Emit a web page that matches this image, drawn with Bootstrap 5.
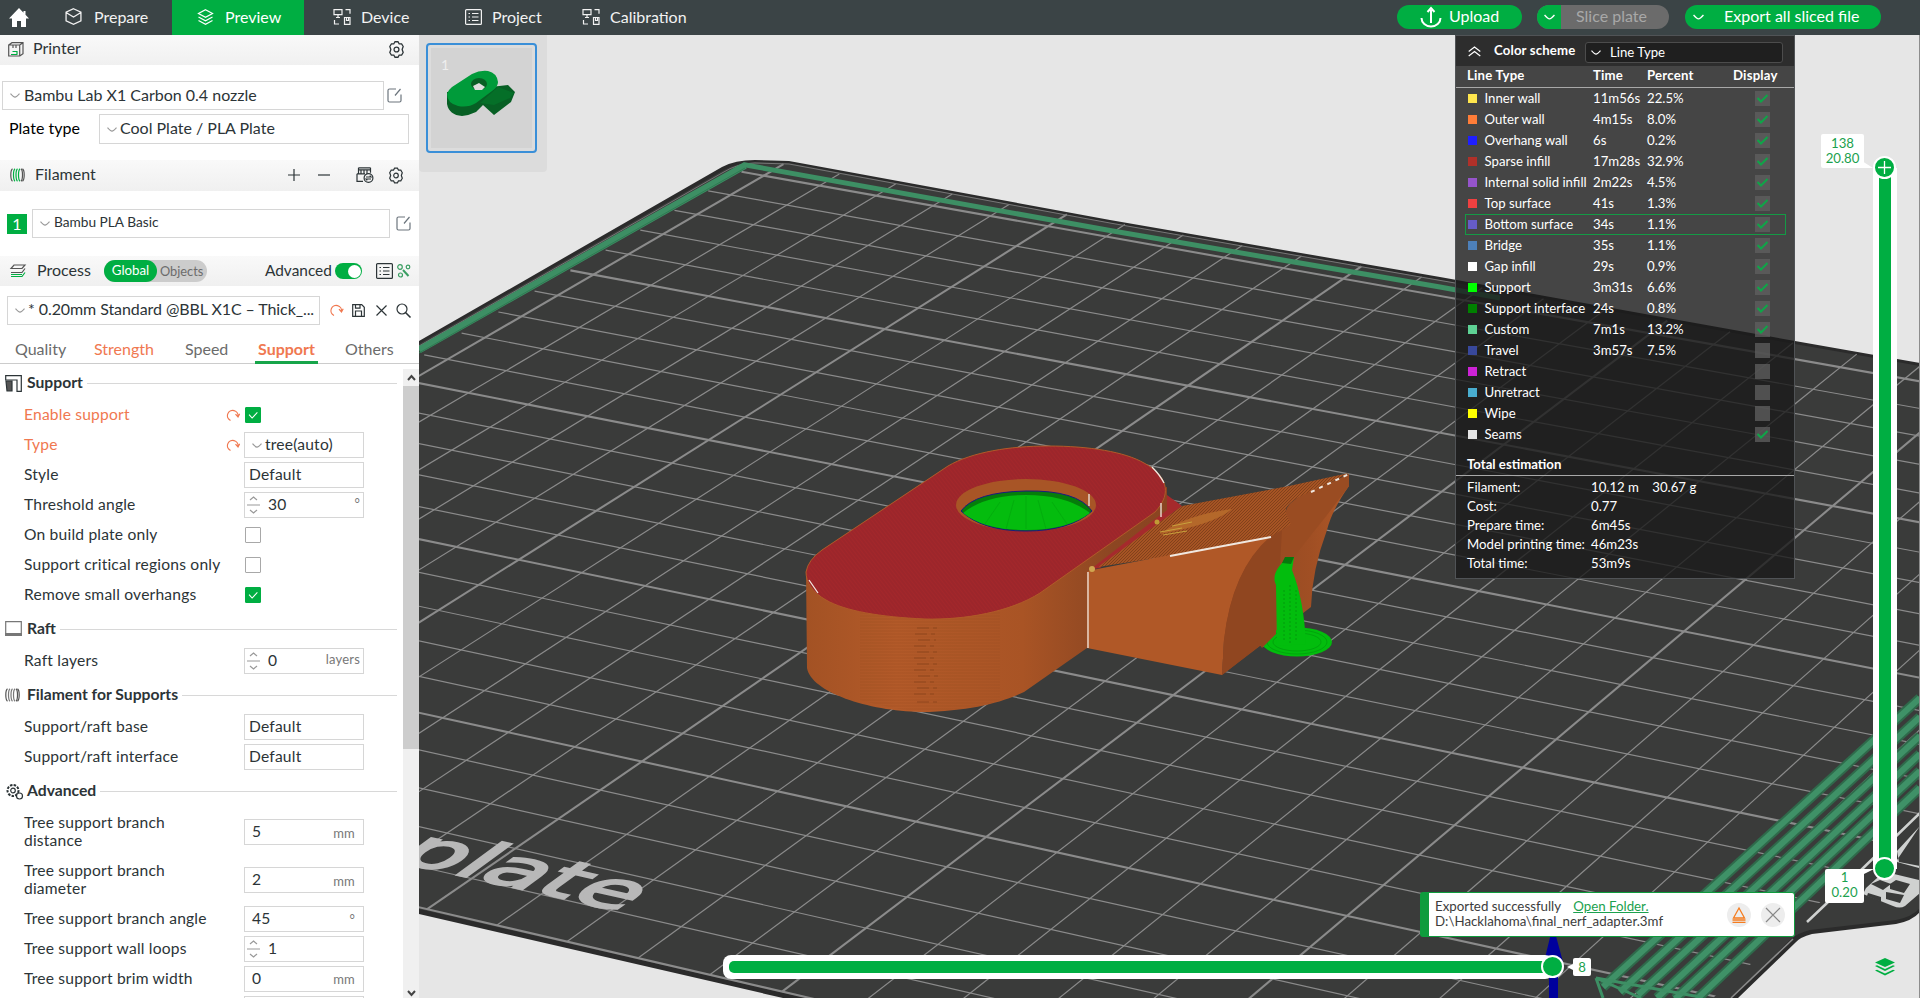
<!DOCTYPE html>
<html lang="en">
<head>
<meta charset="utf-8">
<title>Slicer preview</title>
<meta name="viewport" content="width=device-width, initial-scale=1">
<link href="https://cdn.jsdelivr.net/npm/bootstrap@5.3.0/dist/css/bootstrap.min.css" rel="stylesheet">
<style>
:root{--grn:#00ae42;--org:#f07850;--ink:#2c3437}
body{font-family:Lato,"Noto Sans",sans-serif;font-size:16px;line-height:1.2;color:var(--ink);height:998px;overflow:hidden;background:#e6e6e6}
svg{display:block;flex:none;overflow:visible}
.ic{fill:none;stroke:currentColor;stroke-width:1.2}
.topbar{height:35px;background:#3b4446;color:#f2f2f2;font-size:16px}
.tab-i{height:35px;display:flex;align-items:center;gap:12px;padding-bottom:2px}
.tab-i.on{background:var(--grn);color:#fff}
.pill{height:24px;border-radius:12px;background:var(--grn);color:#fff;overflow:hidden;margin-top:-1px}
.pill>span{padding-bottom:2px}
.pill.off{background:#6b6b6b;color:#a8a8a8}
.side{width:419px;background:#fff}
.bar-h{background:linear-gradient(#f9f9f9,#f0f0f0);font-size:16px}
.bar-h>span{padding-bottom:2px}
.box{border:1px solid #d6d6d6;background:#fff;display:flex;align-items:center;white-space:nowrap;overflow:hidden;padding-bottom:2px}
.chev{width:10px;height:5px;color:#999;margin-top:2px}
.num1{width:20px;height:20px;background:var(--grn);color:#fff}
.seg{width:103px;height:22px;border-radius:11px;background:#ccc;color:#6b6b6b;font-size:12.8px}
.seg b{width:53px;height:22px;border-radius:11px;background:var(--grn);color:#fff;font-weight:400;font-size:13.3px}
.sw{width:27px;height:16px;border-radius:8px;background:var(--grn)}
.sw i{width:13px;height:13px;border-radius:50%;background:#fff;margin:1.5px}
.tabs{height:39px;border-bottom:1px solid #ccc;font-size:16px;color:#6b6b6b;position:relative}
.tabs span{line-height:48px;height:39px}
.org{color:var(--org)}
.tabs .act{font-weight:700;border-bottom:3px solid #17a54a;padding:0 3px}
.grp{height:34px;margin-top:2px;font-weight:700;font-size:15.7px;padding-left:5px;padding-right:6px}
.grp span{padding-bottom:2px}
.grp hr{border-color:#d8d8d8;opacity:1;margin:0}
.opt{height:30px;padding-left:24px;font-size:15.6px;letter-spacing:.2px}
.opt.tall{height:48px;line-height:18px}
.opt .lab{width:202px;padding-bottom:2px}
.opt .rs{width:18px}
.opt .box{width:120px;height:26px}
.unit{font-size:13px;color:#777;margin-left:auto}
.chk{width:16px;height:16px;border:1px solid #a8a8a8;border-radius:1px;background:#fff;margin-left:1px}
.chk.on{background:var(--grn);border-color:var(--grn)}
.spin{width:13px;margin:2px 8px 0 2px;color:#999}
.sbar{width:16px;height:629px;margin-top:5px;background:#f0f0f0;color:#444}
.thumbtrk{background:#cdcdcd;height:363px;margin-top:17px}
.stage{position:relative;background:#e6e6e6;overflow:hidden}
.plate-card{position:absolute;left:0;top:0;width:128px;height:137px;background:#dcdcdc;border-radius:0 0 4px 4px}
.plate-card>div{position:absolute;left:7px;top:8px;width:111px;height:110px;border:2px solid #3a8fd8;border-radius:4px;padding:3px}
.plate-card>div>div{background:#d3d3d3;width:101px;height:100px}
.legend{position:absolute;left:1036px;top:0;width:340px;height:544px;background:rgba(26,26,26,.79);border:1px solid #505356;color:#fff;font-size:13.2px}
.lg-top{height:30px;background:rgba(30,30,30,.6)}
.lg-sel{width:198px;height:21px;border:1px solid #4c4c4c;border-radius:3px;background:#1f1f1f;margin-left:8px;margin-top:3px}
.lg-row{height:21px;display:grid;grid-template-columns:17px 108.5px 54px 107.5px 15px;align-items:center;margin:0 8px 0 8.5px;padding-left:2px;white-space:nowrap;border:1px solid transparent}
.lg-row.hot{border-color:#149a45}
.lg-row i{width:9px;height:9px}
.lg-row em{width:15px;height:15px;background:rgba(96,96,96,.75);display:block}
.lg-hd{height:22px;border-bottom:1px solid #a8a8a8;font-weight:700;padding-left:11px;padding-bottom:1px;display:flex;align-items:center}
.est{height:19px;padding-left:11px}
.est span:first-child{width:124px}
.toastx{position:absolute;left:1001px;top:857px;width:375px;height:45px;background:#fff;border:1px solid #0f9c3d;border-left:9px solid #0f9c3d;border-radius:3px;font-size:13.3px;line-height:15px;color:#3c3c3c}
.rnd{width:24px;height:24px;border-radius:50%;background:#ededed;flex:none}
.vs{position:absolute;left:1454px;top:133px;width:24px;height:701px;background:#fff;padding:0 6px}
.hs{position:absolute;left:304px;top:920px;width:830px;height:24px;background:#fff;border-radius:8px;padding:6px 0 6px 6px}
.hs div{background:var(--grn);height:12px;border-radius:5px}
.knob{position:absolute;width:23px;height:23px;border-radius:50%;background:var(--grn);border:2px solid #fff}
.tipx{position:absolute;background:#fff;color:#1ba14e;border-radius:2px;text-align:center;font-size:13.2px;line-height:15px}
</style>
</head>
<body class="d-flex flex-column">
<svg width="0" height="0" class="position-absolute">
 <defs>
  <symbol id="gear" viewBox="0 0 16 16"><path d="M5.5 2.6 6.6.7h2.8l1.1 1.9 2.3.1 1.5 2.5-1 2.8 1 2.8-1.5 2.5-2.3.1-1.1 1.9H6.6l-1.1-1.9-2.3-.1-1.5-2.5 1-2.8-1-2.8 1.5-2.5z"/><circle cx="8" cy="8" r="2.3"/></symbol>
  <symbol id="edit" viewBox="0 0 15 15"><path d="M9 1H2.500Q1 1 1 2.500V12.500Q1 14 2.500 14H12.500Q14 14 14 12.500V6.500M8 7.500 13.500 1"/></symbol>
  <symbol id="dn" viewBox="0 0 10 5"><path d="M.5.7Q3.500 4.200 5 4.200T9.500.7"/></symbol>
  <symbol id="undo" viewBox="0 0 14 14"><path d="M4.500 12.500A5.300 5.300 0 1 1 12 8.500M9.500 6.200 12 9l1.700-3.200"/></symbol>
  <symbol id="spool" viewBox="0 0 15 14"><path d="M2.500.8Q.8 2 .8 7t1.700 6.200M12.500.8Q14.200 2 14.200 7t-1.700 6.200M11 .8Q12.500 2 12.500 7T11 13.200" stroke="#555"/><path d="M5 .8Q3.500 2 3.500 7T5 13.200M7.500.8Q6 2 6 7t1.500 6.200M10 .8Q8.500 2 8.500 7T10 13.200"/></symbol>
  <symbol id="list" viewBox="0 0 17 16"><rect x=".6" y=".6" width="15.800" height="14.800" rx="1"/><path d="M3.500 4.500h1.500M7 4.500h6.500M3.500 8h1.500M7 8h6.500M3.500 11.500h1.500M7 11.500h6.500"/></symbol>
  <symbol id="net" viewBox="0 0 18 16"><path d="M1 .7h8v5H1zM3 8.500h4M5 5.700v2.500M1.500 11v4h4.500M12.500.7h4.500v4M11.500 8.500h5.500v6.800h-5.500zM13.500 8.500v3h2v-3"/></symbol>
  <symbol id="layers" viewBox="0 0 16 16"><path d="M8 .8 15 4.500 8 8.200 1 4.500zM1 8l7 3.700L15 8M1 11.500l7 3.700 7-3.700"/></symbol>
 </defs>
</svg>

<header class="topbar d-flex flex-shrink-0 align-items-center">
 <svg width="20" height="20" viewBox="0 0 20 20" fill="#fff" style="margin-left:9px"><path d="M10 0 0 10.500h3V19h5v-6h4v6h5v-8.500h3L16.500 6.700V3h-2v1.700z"/></svg>
 <div class="tab-i" style="width:143px;padding-left:36px"><svg class="ic" width="17" height="17" viewBox="0 0 16 16"><path d="M8 .7 15 4v8l-7 3.300L1 12V4zM1 4.200 8 8.500l7-4.300"/></svg><span>Prepare</span></div>
 <div class="tab-i on" style="width:132px;padding-left:25px;gap:11px"><svg class="ic" width="17" height="16"><use href="#layers"/></svg>Preview</div>
 <div class="tab-i" style="width:132px;padding-left:29px;gap:10px"><svg class="ic" width="18" height="16"><use href="#net"/></svg>Device</div>
 <div class="tab-i" style="width:118px;padding-left:29px;gap:10px"><svg class="ic" width="17" height="16"><use href="#list"/></svg>Project</div>
 <div class="tab-i" style="width:140px;padding-left:28px;gap:10px"><svg class="ic" width="18" height="16"><use href="#net"/></svg>Calibration</div>
 <div class="d-flex ms-auto" style="margin-right:39px">
  <div class="pill d-flex align-items-center" style="width:125px;padding-left:23px;gap:7px"><svg width="22" height="22" viewBox="0 0 22 22" fill="none" stroke="#fff" stroke-width="2"><path d="M1.500 12a9.500 8.500 0 0 0 19 0M11 17V4M7.500 6 11 2l3.500 4"/></svg><span>Upload</span></div>
  <div class="pill off d-flex align-items-center" style="width:132px;margin-left:15px"><div class="h-100 d-flex align-items-center justify-content-center" style="width:24px;background:#00ae42;color:#fff"><svg class="ic" width="11" height="6"><use href="#dn"/></svg></div><span style="margin-left:15px">Slice plate</span></div>
  <div class="pill d-flex align-items-center" style="width:196px;margin-left:16px;padding-left:8px"><svg class="ic" width="11" height="6"><use href="#dn"/></svg><span style="margin-left:20px">Export all sliced file</span></div>
 </div>
</header>

<div class="d-flex flex-grow-1">
<aside class="side flex-shrink-0 d-flex flex-column overflow-hidden" style="height:963px">
 <div class="bar-h d-flex align-items-center flex-shrink-0" style="height:30px;padding:0 14px 2px 8px">
  <svg class="ic" width="16" height="15" viewBox="0 0 16 15" style="color:#555"><path d="M.7 3h11v11H.7zM.7 3 4 .7h11v11L11.700 14M15 .7 11.700 3M5 3v3M8 3v3"/><path d="M3 12.500h6.500M4.500 9.500H9v2.500" stroke="#00ae42"/></svg>
  <span style="margin-left:9px">Printer</span><svg class="ic ms-auto" width="17" height="17"><use href="#gear"/></svg>
 </div>
 <div class="flex-shrink-0" style="height:95px;padding:16px 10px 0 2px">
  <div class="d-flex align-items-center"><div class="box" style="width:382px;height:29px;padding-left:7px;gap:4px"><svg class="ic chev"><use href="#dn"/></svg>Bambu Lab X1 Carbon 0.4 nozzle</div><svg class="ic text-secondary" style="margin-left:3px" width="15" height="15"><use href="#edit"/></svg></div>
  <div class="d-flex align-items-center" style="margin-top:4px"><span class="text-black" style="width:97px;padding:0 0 2px 7px">Plate type</span><div class="box" style="width:310px;height:30px;padding-left:7px;gap:3px"><svg class="ic chev"><use href="#dn"/></svg>Cool Plate / PLA Plate</div></div>
 </div>
 <div class="bar-h d-flex align-items-center flex-shrink-0" style="height:31px;padding:0 15px 1px 10px">
  <svg class="ic" width="15" height="14" style="color:#00ae42"><use href="#spool"/></svg>
  <span style="margin-left:10px">Filament</span>
  <svg class="ic ms-auto" width="12" height="12" viewBox="0 0 12 12"><path d="M6 0v12M0 6h12"/></svg>
  <svg class="ic" style="margin-left:18px" width="12" height="12" viewBox="0 0 12 12"><path d="M0 6h12"/></svg>
  <svg class="ic" style="margin-left:26px" width="18" height="16" viewBox="0 0 18 16"><path d="M2.500.8h12M2.500 2.800h12M2.500.8v6M5 2.800v4M8 2.800v4M11 2.800v4M14.500.8v5M1 6.800h8M1 6.800v7.500h6"/><circle cx="12.500" cy="11" r="4.400"/><path d="M10 10h5l-1.200-1.300M15 12h-5l1.200 1.300"/></svg>
  <svg class="ic" style="margin-left:14px" width="16" height="17"><use href="#gear"/></svg>
 </div>
 <div class="d-flex align-items-center flex-shrink-0" style="height:65px;padding-left:7px;font-size:13.7px"><div class="num1 text-center fs-6" style="line-height:19px">1</div><div class="box" style="width:358px;height:29px;margin-left:5px;padding-left:7px;gap:4px"><svg class="ic chev"><use href="#dn"/></svg>Bambu PLA Basic</div><svg class="ic text-secondary" style="margin-left:6px" width="15" height="15"><use href="#edit"/></svg></div>
 <div class="bar-h d-flex align-items-center flex-shrink-0" style="height:30px;padding-left:10px">
  <svg class="ic" width="16" height="14" viewBox="0 0 16 14" style="color:#555"><path d="M4 1h11l-3 3.500H1zM1 8.500h11l3-4"/><path d="M1 12.500h11l3-4M1 10.500h11" stroke="#00ae42"/></svg>
  <span style="width:67px;margin-left:11px">Process</span>
  <div class="seg d-flex align-items-center flex-shrink-0" style="line-height:21px"><b class="text-center flex-shrink-0">Global</b><span style="margin-left:3px">Objects</span></div>
  <span style="margin-left:58px;width:70px;font-size:15.4px">Advanced</span><div class="sw d-flex justify-content-end"><i></i></div>
  <svg class="ic" style="margin-left:14px" width="17" height="16"><use href="#list"/></svg>
  <svg class="ic" style="margin-left:4px;color:#3a9e62" width="14" height="14" viewBox="0 0 14 14"><circle cx="3" cy="3" r="2.300"/><circle cx="11" cy="3" r="1.800"/><circle cx="3.500" cy="11" r="2"/><path d="M6 6l5.500 6" stroke-width="2"/></svg>
 </div>
 <div class="d-flex align-items-center flex-shrink-0" style="height:39px;padding:9px 8px 0 7px"><div class="box" style="width:314px;height:29px;padding-left:7px;gap:3px"><svg class="ic chev"><use href="#dn"/></svg><span style="letter-spacing:-.08px">* 0.20mm Standard @BBL X1C – Thick_...</span></div>
  <svg class="ic org" style="margin-left:9px" width="15" height="14"><use href="#undo"/></svg>
  <svg class="ic" style="margin-left:8px" width="13" height="13" viewBox="0 0 13 13"><path d="M.7.7h9L12.300 3.300v9H.7zM3.500 12V7h6v5M3.500.7v3.500h4.500V.7"/></svg>
  <svg class="ic" style="margin-left:11px" width="11" height="11" viewBox="0 0 11 11"><path d="M.5.500l10 10M10.500.5l-10 10"/></svg>
  <svg class="ic" style="margin-left:9px" width="15" height="15" viewBox="0 0 15 15"><circle cx="6" cy="6" r="5"/><path d="M9.500 9.500l5 5" stroke-width="1.600"/></svg>
 </div>
 <div class="tabs d-flex flex-shrink-0"><span style="margin-left:15px;width:79px">Quality</span><span class="org" style="width:91px">Strength</span><span style="width:70px">Speed</span><span class="org act" style="width:63px">Support</span><span style="margin-left:27px">Others</span></div>
 <div class="d-flex flex-grow-1" style="min-height:0">
  <div id="opts" style="width:403px"></div>
  <div class="sbar position-relative"><svg class="ic position-absolute" style="left:4px;top:6px;stroke-width:2" width="9" height="6" viewBox="0 0 9 6"><path d="M1 5 4.500 1 8 5"/></svg><div class="thumbtrk"></div><svg class="ic position-absolute" style="left:4px;bottom:2px;stroke-width:2" width="9" height="6" viewBox="0 0 9 6"><path d="M1 1 4.500 5 8 1"/></svg></div>
 </div>
</aside>

<main class="stage flex-grow-1">
 <svg width="1501" height="963" viewBox="419 35 1501 963">
  <defs>
   <pattern id="hat" width="3" height="3" patternUnits="userSpaceOnUse" patternTransform="rotate(52)"><rect width="3" height="3" fill="#a3272b"/><path d="M0 1h3" stroke="#95242a" stroke-width="1"/></pattern>
   <pattern id="lay" width="4" height="3" patternUnits="userSpaceOnUse"><path d="M0 1h4" stroke="#8a431c" stroke-width=".8" opacity=".35"/></pattern>
   <pattern id="wov" width="3" height="3" patternUnits="userSpaceOnUse"><rect width="3" height="3" fill="#a65424"/><path d="M0 3 3 0" stroke="#7e3e1a" stroke-width=".9"/></pattern>
   <linearGradient id="body"><stop offset="0" stop-color="#a35224"/><stop offset=".25" stop-color="#b35a29"/><stop offset=".6" stop-color="#a95425"/><stop offset=".85" stop-color="#8c4622"/><stop offset="1" stop-color="#8a4421"/></linearGradient>
   <linearGradient id="side" x1="0" x2="1"><stop offset="0" stop-color="#8c4520"/><stop offset=".7" stop-color="#a04f24"/><stop offset="1" stop-color="#b05827"/></linearGradient>
   <clipPath id="pc"><path d="M419 342 722 168Q735 160 755 161L789 162 1110 221 1440 278 1795 342 1920 364V813L1713 998H783L419 913z"/></clipPath>
  </defs>
  <path fill="#2b2b2b" d="M419 341 722 167Q735 160 755 160L789 161 1110 220 1440 277 1795 341 1920 363V912Q1912 921 1896 924L1812 934Q1800 937 1795 943L1738 998H783L419 914z"/>
  <path fill="#3a3b3a" d="M419 344 724 170Q737 163 755 162L789 163 1110 223 1440 280 1795 344 1920 366V908Q1912 917 1896 920L1810 930Q1798 933 1791 939L1731 998H806L419 909z"/>
  <g id="grid" clip-path="url(#pc)" stroke="#8b8b8b" fill="none"></g>
  <path d="M419 346 722 173Q738 163 755 163L789 164 1110 223 1455 283" fill="none" stroke="#777" stroke-width="1"/>
  <g stroke="#3d8f64" fill="none"><path d="M419 350 745 165.500" stroke-width="7"/><path d="M419 353 745 168" stroke="#2f7a52" stroke-width="1"/><path d="M743 164.500 1110 230.500 1440 287 1500 298" stroke-width="5"/></g>
  <g id="purge" fill="none"></g>
  <path d="M1641 998 1596 978 1700 997M1596 978 1603 998" fill="none" stroke="#3d8f64" stroke-width="3"/>
  <path d="M1793 939 1731 998" stroke="#8b8b8b" stroke-width="1.500"/>
  <g fill="#cfd1d0"><path d="M1920 826 1897 851 1899 862 1920 866V893L1905 906Q1900 909 1893 906L1863 894 1866 888 1897 860z"/><path d="M1920 813 1827 903 1807 922" stroke="#cfd1d0" stroke-width="2.500" fill="none"/></g>
  <g fill="#3a3b3a"><path d="M1897 862l22 6v12l-25-6zM1871 884l9-4 11 4-8 6zM1890 884l6-4 14 4-6 9-14-4zM1868 893l13 4v5l-14-6zM1886 892l18 3-4 8-14-4z"/></g>
  <text font-family="DejaVu Sans" font-size="40" fill="#b8b8b8" stroke="#b8b8b8" stroke-width="1.600" transform="matrix(2.280 .51 -1.480 1.080 391 860)">plate</text>
  <g fill="#00009c"><path d="M1553 925 1544 962h19zM1549 960h9v40h-9z"/></g>
  <!-- printed part -->
  <path fill="#a52a2c" d="M1167 495 1182 506 1100 568 1088 570z"/>
  <path fill="url(#side)" d="M1349 474V486Q1332 510 1327 530 1312 570 1311 607L1222 675 1226 600 1270 520z"/>
  <path fill="url(#wov)" d="M1098 567 1182 506 1289 486 1349 473 1312 492Q1284 502 1286 512L1291 524 1270 538 1170 556z"/>
  <path fill="#9a4c22" d="M1349 474V486L1327 515 1291 560 1270 538 1291 524 1286 514Q1284 502 1312 491z"/>
  <path fill="#b05827" d="M1087 571 1170 555 1270 537Q1232 570 1224 640L1222 675 1087 648z"/>
  <path fill="#904620" d="M1222 675 1224 640Q1232 570 1270 537L1282 530 1276 633z"/>
  <path fill="url(#body)" d="M806 570 807 668C811 692 868 711 921 712 970 711 1000 703 1024 692L1087 648V572L1167 510V487z"/>
  <path fill="url(#lay)" d="M860 610V700Q900 711 921 711 970 711 1000 700V600z"/>
  <g stroke="#7f3d18" stroke-width="1" stroke-dasharray="12 4" opacity=".6"><path d="M917 628h20M915 634h20M918 640h18M914 646h20M917 652h20M914 658h20M917 664h20M914 670h20M918 676h20M914 682h20M917 688h20M914 694h20M917 702h20"/></g>
  <path fill="url(#hat)" stroke="#b05a28" d="M806 572Q808 560 822 550L948 466C972 452 1010 446 1048 446 1090 446 1125 452 1144 463 1165 474 1174 492 1155 512L1040 593C1010 612 965 620 925 619 880 617 845 611 826 600 812 592 806 582 806 572z"/>
  <ellipse cx="1026" cy="505" rx="70" ry="26" fill="#a85526"/>
  <path d="M961 511Q975 492 1026 491T1092 511Q1070 531 1026 531T961 511z" fill="#057d0b" stroke="#1a1a80" stroke-width="1"/>
  <path d="M963 513Q985 495 1026 495T1090 513Q1068 530 1026 530T963 513z" fill="#04bc0e"/>
  <g stroke="#03a60c" fill="none" stroke-width=".8" opacity=".8"><path d="M1026 496v33M1014 500l-8 29M1038 500l8 29M1000 502l-15 22M1052 502l15 22"/></g>
  <g stroke="#f0e8e0" fill="none" stroke-width="1.300"><path d="M1089 494v12M1152 467Q1160 475 1164 483M1161 503v14M809 580l9 13M1088 572v76" /><path d="M1170 556 1271 537" stroke-width="2"/><path d="M1311 492 1349 474" stroke-dasharray="4 5" stroke-width="2"/></g>
  <path d="M1160 534Q1185 515 1232 509 1215 524 1160 534z" fill="#b4682a"/><path d="M1160 532l22-4M1163 535l24-4M1172 526l20-4" stroke="#c8a13c" fill="none"/>
  <circle cx="1157" cy="522" r="2.500" fill="#c09a35"/><circle cx="1092" cy="569" r="3" fill="#d0a550"/>
  <g><ellipse cx="1297" cy="642" rx="35" ry="14.500" fill="#02bd0d"/><g stroke="#029a0c" fill="none" stroke-width=".7"><ellipse cx="1297" cy="642" rx="30" ry="12"/><ellipse cx="1297" cy="642" rx="24" ry="9"/></g><path fill="#904620" d="M1256 640 1276 620V634L1262 648z"/>
  <path d="M1282 563 1294 557 1292 570Q1304 600 1306 644L1277 646 1276 585Q1271 575 1282 563z" fill="#02bd0d"/><path d="M1282 563 1285 557H1294L1291 564z" fill="#067a0d"/><path d="M1284 590v50M1290 585v60M1296 590v50" stroke="#029a0c" stroke-dasharray="2 2"/></g>
 </svg>

 <div class="plate-card"><div><div><svg width="100" height="100" viewBox="431 48 100 100"><text x="441" y="70" fill="#eee" font-size="14">1</text>
  <path fill="#075f24" d="M447 92V104Q449 115 462 116 470 115 476 112L483 105 494 115 511 102 515 92 508 85z"/><path fill="#056f28" d="M480 103 498 87 514 93 510 98 494 105z"/>
  <path fill="#009b3a" d="M447 94Q448 90 452 87L472 74Q480 70 488 71 497 73 498 82 498 87 492 91L476 103Q468 108 458 106 447 103 447 94z"/><ellipse cx="479" cy="84" rx="8" ry="6" fill="#075f24"/><path fill="#ddd" d="M473 86 479 83 485 87 482 90H475z"/></svg></div></div></div>

 <section class="legend" id="legend">
  <div class="lg-top d-flex align-items-center"><svg class="ic" style="margin-left:12px;margin-right:13px" width="13" height="11" viewBox="0 0 13 11"><path d="M.7 5.500 6.500 1l5.800 4.500M.7 10 6.500 5.500 12.300 10"/></svg><b style="width:83px;letter-spacing:.15px">Color scheme</b><div class="lg-sel d-flex align-items-center"><svg class="ic" width="10" height="5" style="margin:0 9px 0 5px"><use href="#dn"/></svg>Line Type</div></div>
  <div class="lg-hd" style="letter-spacing:.2px"><span style="width:126px">Line Type</span><span style="width:54px">Time</span><span style="width:86px">Percent</span><span>Display</span></div>
 </section>

 <div class="vs"><div class="h-100" style="background:#00ae42"></div></div>
 <div class="knob" style="left:1454px;top:121px"><svg width="19" height="19" viewBox="0 0 19 19" stroke="#fff" stroke-width="1.300"><path d="M9.500 3v13M3 9.500h13"/></svg></div>
 <div class="knob" style="left:1454px;top:822px"></div>
 <svg class="position-absolute" style="left:1440px;top:120px" width="12" height="14" fill="#fff"><path d="M3 6 14 13H3z"/></svg>
 <svg class="position-absolute" style="left:1440px;top:832px" width="12" height="14" fill="#fff"><path d="M3 2H15L3 8z"/></svg>
 <div class="tipx" style="left:1402px;top:99px;width:43px;height:34px;padding-top:2px">138<br>20.80</div>
 <div class="tipx" style="left:1406px;top:834px;width:39px;height:34px;padding-top:1px">1<br>0.20</div>
 <div class="hs"><div></div></div>
 <div class="knob" style="left:1122px;top:920px"></div>
 <svg class="position-absolute" style="left:1148px;top:928px" width="8" height="8" fill="#fff"><path d="M0 4 8 0v8z"/></svg>
 <div class="tipx" style="left:1154px;top:923px;width:18px;height:18px;line-height:18px">8</div>
 <svg class="position-absolute" style="left:1456px;top:923px" width="20" height="18" viewBox="0 0 20 18" fill="#00ae42"><path d="M10 0 20 4.500 10 9 0 4.500zM0 8l2-.8 8 3.700 8-3.700 2 .8-10 5zM0 12.500l2-.8 8 3.700 8-3.700 2 .8-10 5z"/></svg>

 <div class="toastx d-flex align-items-center"><div class="flex-shrink-0" style="padding-left:6px;width:298px;white-space:nowrap;margin-top:-1px">Exported successfully <span class="text-decoration-underline" style="color:#1ba14e;margin-left:9px">Open Folder.</span><br>D:\Hacklahoma\final_nerf_adapter.3mf</div>
  <div class="rnd d-flex align-items-center justify-content-center"><svg width="14" height="16" viewBox="0 0 14 16" fill="none" stroke="#f57c1f" stroke-width="1.300"><path d="M7 1 12.500 11h-11zM.5 13h13M.5 15.300h13"/></svg></div>
  <div class="rnd d-flex align-items-center justify-content-center" style="margin-left:10px"><svg width="16" height="16" viewBox="0 0 16 16" stroke="#888" stroke-width="1.200"><path d="M1 1l14 14M15 1 1 15"/></svg></div>
 </div>
 <div class="position-absolute end-0 top-0 h-100" style="width:1px;background:#8d8d8d"></div>
</main>
</div>

<script src="https://cdn.jsdelivr.net/npm/bootstrap@5.3.0/dist/js/bootstrap.bundle.min.js"></script>
<script>
/* settings list */
const gi={
 sup:'<svg class="ic" width="17" height="17" viewBox="0 0 17 17"><path d="M.7.700h15.600v15.600H12V5H.700z"/><path d="M1 6h6v10H2z" fill="#555"/></svg>',
 raft:'<svg class="ic" width="17" height="16" viewBox="0 0 17 16" style="color:#777"><path d="M.7.700h15.600v12H.700z"/><path d="M0 13.500h17" stroke-width="3"/></svg>',
 fil:'<svg class="ic" width="15" height="14" style="color:#777"><use href="#spool"/></svg>',
 adv:'<svg class="ic" width="18" height="17" viewBox="0 0 18 17"><circle cx="8" cy="7.500" r="5.500" stroke-dasharray="2.500 1.200" stroke-width="2"/><circle cx="8" cy="7.500" r="2.300"/><circle cx="14.500" cy="13" r="3" fill="#fff"/></svg>'};
const rows=[['g','Support','sup'],['c','Enable support',1,1],['t','Type','tree(auto)',1],['d','Style','Default'],['s','Threshold angle','30','°'],['c','On build plate only',0],['c','Support critical regions only',0],['c','Remove small overhangs',1],
['g','Raft','raft'],['s','Raft layers','0','layers'],['g','Filament for Supports','fil'],['d','Support/raft base','Default'],['d','Support/raft interface','Default'],
['g','Advanced','adv'],['n','Tree support branch<br>distance','5','mm'],['n','Tree support branch<br>diameter','2','mm'],['n','Tree support branch angle','45','°'],['s','Tree support wall loops','1',''],['n','Tree support brim width','0','mm'],['n','','','']];
const undo='<svg class="ic org" width="14" height="14"><use href="#undo"/></svg>';
const spin='<div class="spin"><svg class="ic" width="13" height="20" viewBox="0 0 13 20"><path d="M3 5 6.500 2 10 5M0 10h13M3 15l3.500 3 3.500-3"/></svg></div>';
opts.innerHTML=rows.map(([k,l,v,x])=>{
 if(k=='g')return `<div class="grp d-flex align-items-center"><div style="width:22px">${gi[v]}</div><span class="text-nowrap">${l}</span><hr class="flex-grow-1 ms-1"></div>`;
 const ch=(k=='c'||k=='t')&&x;
 const f=k=='c'?`<div class="chk ${v?'on':''}">${v?'<svg class="ic text-white" width="14" height="14" viewBox="0 0 16 16"><path d="M3.500 7.500 7 11.500 13 5"/></svg>':''}</div>`
  :k=='t'?`<div class="box" style="padding-left:7px;gap:3px"><svg class="ic chev"><use href="#dn"/></svg>${v}</div>`
  :k=='d'?`<div class="box" style="padding-left:4px">${v}</div>`
  :k=='s'?`<div class="box">${spin}${v}<span class="unit" style="padding-right:3px">${x}</span></div>`
  :`<div class="box" style="padding-left:7px">${v}<span class="unit pt-1" style="padding-right:8px">${x}</span></div>`;
 return `<div class="opt d-flex align-items-center ${l.includes('<br>')?'tall':''}"><div class="lab text-nowrap ${ch?'org':''}">${l}</div><div class="rs">${ch?undo:''}</div>${f}</div>`}).join('');

/* legend rows */
const tick='<svg width="15" height="15" viewBox="0 0 15 15" fill="none" stroke="#0fa548" stroke-width="2"><path d="M2.500 7 6 10.500 12.500 4"/></svg>';
const L=[['Inner wall','11m56s','22.5%','#ffe64d',1],['Outer wall','4m15s','8.0%','#ff7d38',1],['Overhang wall','6s','0.2%','#1f1fff',1],['Sparse infill','17m28s','32.9%','#b03029',1],['Internal solid infill','2m22s','4.5%','#9654cc',1],['Top surface','41s','1.3%','#f04040',1],['Bottom surface','34s','1.1%','#665cc7',1],['Bridge','35s','1.1%','#4d80ba',1],['Gap infill','29s','0.9%','#fff',1],['Support','3m31s','6.6%','#00ff00',1],['Support interface','24s','0.8%','#008000',1],['Custom','7m1s','13.2%','#5ed194',1],['Travel','3m57s','7.5%','#38489b',0],['Retract','','','#cd22d6',0],['Unretract','','','#49adcf',0],['Wipe','','','#ffff00',0],['Seams','','','#e6e6e6',1]];
legend.insertAdjacentHTML('beforeend',L.map(r=>`<div class="lg-row ${r[0]=='Bottom surface'?'hot':''}"><i style="background:${r[3]}"></i><span>${r[0]}</span><span>${r[1]}</span><span>${r[2]}</span><em>${r[4]?tick:''}</em></div>`).join('')
 +'<div class="lg-hd" style="height:31px;padding-top:10px;margin-bottom:2px">Total estimation</div>'
 +[['Filament:','10.12 m <span style="margin-left:10px">30.67 g</span>'],['Cost:','0.77'],['Prepare time:','6m45s'],['Model printing time:','46m23s'],['Total time:','53m9s']].map(e=>`<div class="est d-flex align-items-center text-nowrap"><span>${e[0]}</span><div>${e[1]}</div></div>`).join(''));

/* bed grid: least-squares homography from (col,row) to screen */
const C=[[0,0,764.9,175.7],[5,0,1048.4,226.3],[0,5,593,274.3],[5,5,883.2,329.3],[20,15,1522.9,767.7],[15,15,1174.2,695],[10,25,428.3,908.3],[10,20,640,762.7],[20,5,1832.2,505.8]];
const M=[...Array(8)].map(()=>Array(9).fill(0));
for(const [u,v,x,y] of C)for(const r of [[u,v,1,0,0,0,-u*x,-v*x,x],[0,0,0,u,v,1,-u*y,-v*y,y]])for(let i=0;i<8;i++)for(let j=0;j<9;j++)M[i][j]+=r[i]*r[j];
for(let i=0;i<8;i++){let p=i;for(let k=i;k<8;k++)if(Math.abs(M[k][i])>Math.abs(M[p][i]))p=k;[M[i],M[p]]=[M[p],M[i]];
 for(let k=0;k<8;k++)if(k!=i){const f=M[k][i]/M[i][i];for(let j=i;j<9;j++)M[k][j]-=f*M[i][j]}}
const h=M.map((r,i)=>r[8]/r[i]);
const P=(u,v)=>{const w=h[6]*u+h[7]*v+1;return ((h[0]*u+h[1]*v+h[2])/w).toFixed(1)+' '+((h[3]*u+h[4]*v+h[5])/w).toFixed(1)};
let g='';
for(let i=0;i<=25;i++){const w=i%5?1.2:2.1;
 g+=`<path stroke-width="${w}" d="M${P(i,-.6)}L${P(i,25)}"/><path stroke-width="${w}" d="M${P(-.4,i)}L${P(25.6,i)}"/>`}
grid.innerHTML=g;

/* purge strands along the bed edge */
const S=[[1603,987,698],[1620,992,717],[1638,995,736],[1657,998,754],[1675,999,771],[1697,999,788]];
purge.innerHTML=S.map(([x,y,r])=>`<path stroke="#2f6a4b" stroke-width="10" d="M${x} ${y}L1920 ${r}"/><path stroke="#3f9167" stroke-width="6" d="M${x} ${y}L1920 ${r}"/>`).join('');
</script>
</body>
</html>
